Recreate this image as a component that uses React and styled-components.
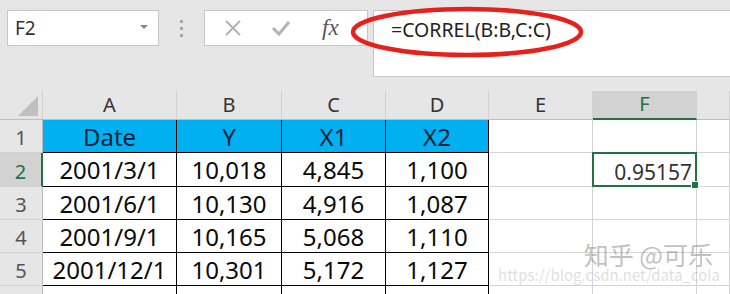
import React from 'react'
import styled, { createGlobalStyle } from 'styled-components'

const Global = createGlobalStyle`
  html, body { margin: 0; padding: 0; background: #fff; }
  body { font-family: 'Noto Sans', 'Open Sans', sans-serif; overflow: hidden; }
`

const Page = styled.div`
  position: relative;
  width: 730px;
  height: 294px;
  overflow: hidden;
  background: #fff;
`

const Ribbon = styled.div`
  height: 91px;
  background: #e6e6e6;
  display: flex;
  align-items: flex-start;
  padding-top: 10px;
  padding-left: 7px;
  box-sizing: border-box;
`

const NameBox = styled.div`
  width: 152px;
  height: 36px;
  box-sizing: border-box;
  background: #fff;
  border: 1px solid #c6c6c6;
  display: flex;
  align-items: center;
  justify-content: space-between;
  padding: 0 10px 0 7px;
  font-size: 19px;
  color: #333;
`

const Caret = styled.span`
  width: 0;
  height: 0;
  border-left: 4px solid transparent;
  border-right: 4px solid transparent;
  border-top: 4px solid #888;
  margin-bottom: 2px;
`

const Grip = styled.div`
  width: 45px;
  height: 36px;
  display: flex;
  flex-direction: column;
  align-items: center;
  justify-content: center;
  gap: 4px;
  span {
    width: 3px;
    height: 3px;
    background: #a6a6a6;
  }
`

const Buttons = styled.div`
  width: 164px;
  height: 36px;
  box-sizing: border-box;
  background: #fff;
  border: 1px solid #c6c6c6;
  display: flex;
  align-items: center;
  padding-left: 19px;
  gap: 29px;
`

const Fx = styled.span`
  font-family: 'Liberation Serif', serif;
  font-style: italic;
  font-size: 23px;
  color: #555;
  margin-left: 2px;
`

const FormulaBar = styled.div`
  flex: 1;
  height: 67px;
  margin-left: 5px;
  box-sizing: border-box;
  background: #fff;
  border: 1px solid #c6c6c6;
  border-right: none;
  padding: 5px 0 0 17px;
  font-size: 19.5px;
  color: #222;
`

const Sheet = styled.div`
  display: grid;
  grid-template-columns: 43px 134px 105px 104px 103px 104px 104px 1fr;
  grid-template-rows: 29px 33px 34px 33px 33px 33px 33px;
`

const Corner = styled.div`
  background: #e6e6e6;
  border-right: 1px solid #d0d0d0;
  border-bottom: 1px solid #bdbdbd;
  position: relative;
  &::after {
    content: '';
    position: absolute;
    right: 4px;
    bottom: 3px;
    border-left: 20px solid transparent;
    border-bottom: 20px solid #bfbfbf;
  }
`

const ColHead = styled.div`
  background: ${p => (p.$active ? '#d2d2d2' : '#e6e6e6')};
  border-right: 1px solid #d0d0d0;
  border-bottom: ${p => (p.$active ? '2px solid #217346' : '1px solid #bdbdbd')};
  display: flex;
  align-items: flex-end;
  justify-content: center;
  padding-bottom: 1px;
  box-sizing: border-box;
  font-size: 20px;
  color: ${p => (p.$active ? '#217346' : '#333')};
`

const RowHead = styled.div`
  background: ${p => (p.$active ? '#d2d2d2' : '#e6e6e6')};
  border-right: ${p => (p.$active ? '2px solid #217346' : '1px solid #bdbdbd')};
  border-bottom: 1px solid #d0d0d0;
  box-sizing: border-box;
  display: flex;
  align-items: flex-end;
  justify-content: center;
  padding-bottom: 1px;
  font-size: 20px;
  color: ${p => (p.$active ? '#217346' : '#555')};
`

const Cell = styled.div`
  box-sizing: border-box;
  border-right: 1px solid ${p => (p.$table ? '#000' : '#d4d4d4')};
  border-bottom: 1px solid ${p => (p.$table ? '#000' : '#d4d4d4')};
  background: ${p => (p.$head ? '#00b0f0' : '#fff')};
  color: ${p => (p.$head ? '#0c2236' : '#0a0a0a')};
  display: flex;
  align-items: center;
  justify-content: center;
  font-size: 24px;
  line-height: 1;
  padding-top: 1px;
`

const Selected = styled(Cell)`
  position: relative;
  border: 2px solid #217346;
  justify-content: flex-end;
  padding-right: 3px;
  padding-top: 6px;
  font-size: 21px;
  color: #333;
  margin: -1px 0 0 -1px;
  &::after {
    content: '';
    position: absolute;
    right: -4px;
    bottom: -4px;
    width: 6px;
    height: 6px;
    background: #217346;
    border: 1px solid #fff;
  }
`

const Ring = styled.svg`
  position: absolute;
  left: 0;
  top: 0;
  pointer-events: none;
`

const Mark = styled.div`
  position: absolute;
  left: 430px;
  top: 242px;
  width: 300px;
  text-align: right;
  color: rgba(140, 140, 140, 0.55);
  font-family: 'Noto Sans CJK SC', sans-serif;
  line-height: 1;
  div:first-child {
    font-size: 25px;
    padding-right: 17px;
  }
  div:last-child {
    font-size: 15px;
    margin-top: 0px;
    color: rgba(160, 160, 160, 0.35);
    padding-right: 10px;
  }
`

const cols = ['A', 'B', 'C', 'D', 'E', 'F', 'G']
const rows = [
  ['Date', 'Y', 'X1', 'X2'],
  ['2001/3/1', '10,018', '4,845', '1,100'],
  ['2001/6/1', '10,130', '4,916', '1,087'],
  ['2001/9/1', '10,165', '5,068', '1,110'],
  ['2001/12/1', '10,301', '5,172', '1,127'],
  ['2002/3/1', '10,305', '5,249', '1,095'],
]

export default function App() {
  return (
    <Page>
      <Global />
      <Ribbon>
        <NameBox>
          F2
          <Caret />
        </NameBox>
        <Grip>
          <span />
          <span />
          <span />
        </Grip>
        <Buttons>
          <svg width="18" height="18" viewBox="0 0 18 18">
            <path d="M2 2 L16 16 M16 2 L2 16" stroke="#b3b3b3" strokeWidth="2" fill="none" />
          </svg>
          <svg width="20" height="18" viewBox="0 0 20 18">
            <path d="M2 9 L8 15 L18 3" stroke="#b3b3b3" strokeWidth="3" fill="none" />
          </svg>
          <Fx>fx</Fx>
        </Buttons>
        <FormulaBar>=CORREL(B:B,C:C)</FormulaBar>
      </Ribbon>
      <Sheet>
        <Corner />
        {cols.map(c => (
          <ColHead key={c} $active={c === 'F'}>{c !== 'G' ? c : ''}</ColHead>
        ))}
        {rows.map((r, i) => (
          <React.Fragment key={i}>
            <RowHead $active={i === 1}>{i + 1}</RowHead>
            {r.map((v, j) => (
              <Cell key={j} $table $head={i === 0}>{v}</Cell>
            ))}
            <Cell />
            {i === 1 ? <Selected>0.95157</Selected> : <Cell />}
            <Cell />
          </React.Fragment>
        ))}
      </Sheet>
      <Ring width="730" height="294">
        <ellipse cx="467" cy="32" rx="114" ry="23" fill="none" stroke="#e8201a" strokeWidth="4.5" />
      </Ring>
      <Mark>
        <div>知乎 @可乐</div>
        <div>https://blog.csdn.net/data_cola</div>
      </Mark>
    </Page>
  )
}
